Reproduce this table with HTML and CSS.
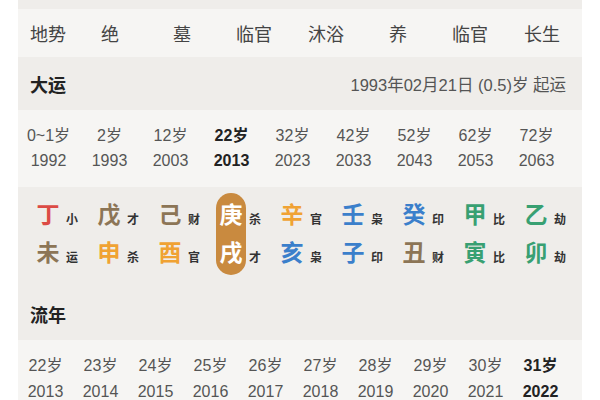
FILE: index.html
```html
<!DOCTYPE html>
<html lang="zh-CN">
<head>
<meta charset="utf-8">
<title>大运流年</title>
<link rel="stylesheet" href="styles.css">
</head>
<body>
<div class="panel">
  <div class="band"></div>
  <div class="state-row">
    <div class="state-label">地势</div>
    <div class="state">绝</div>
    <div class="state">墓</div>
    <div class="state">临官</div>
    <div class="state">沐浴</div>
    <div class="state">养</div>
    <div class="state">临官</div>
    <div class="state">长生</div>
  </div>
  <div class="head">
    <div class="head-title">大运</div>
    <div class="head-note">1993年02月21日 (0.5)岁 起运</div>
  </div>
  <div class="ages ages-9">
    <div class="age"><div>0~1岁</div><div>1992</div></div>
    <div class="age"><div>2岁</div><div>1993</div></div>
    <div class="age"><div>12岁</div><div>2003</div></div>
    <div class="age current"><div>22岁</div><div>2013</div></div>
    <div class="age"><div>32岁</div><div>2023</div></div>
    <div class="age"><div>42岁</div><div>2033</div></div>
    <div class="age"><div>52岁</div><div>2043</div></div>
    <div class="age"><div>62岁</div><div>2053</div></div>
    <div class="age"><div>72岁</div><div>2063</div></div>
  </div>
  <div class="gz">
    <div class="gz-cell">
      <div class="stems"><span class="c-fire">丁</span><span class="c-earth">未</span></div>
      <div class="gods"><span>小</span><span>运</span></div>
    </div>
    <div class="gz-cell">
      <div class="stems"><span class="c-earth">戊</span><span class="c-orange">申</span></div>
      <div class="gods"><span>才</span><span>杀</span></div>
    </div>
    <div class="gz-cell">
      <div class="stems"><span class="c-earth">己</span><span class="c-orange">酉</span></div>
      <div class="gods"><span>财</span><span>官</span></div>
    </div>
    <div class="gz-cell">
      <div class="stems active"><span>庚</span><span>戌</span></div>
      <div class="gods"><span>杀</span><span>才</span></div>
    </div>
    <div class="gz-cell">
      <div class="stems"><span class="c-orange">辛</span><span class="c-water">亥</span></div>
      <div class="gods"><span>官</span><span>枭</span></div>
    </div>
    <div class="gz-cell">
      <div class="stems"><span class="c-water">壬</span><span class="c-water">子</span></div>
      <div class="gods"><span>枭</span><span>印</span></div>
    </div>
    <div class="gz-cell">
      <div class="stems"><span class="c-water">癸</span><span class="c-earth">丑</span></div>
      <div class="gods"><span>印</span><span>财</span></div>
    </div>
    <div class="gz-cell">
      <div class="stems"><span class="c-wood">甲</span><span class="c-wood">寅</span></div>
      <div class="gods"><span>比</span><span>比</span></div>
    </div>
    <div class="gz-cell">
      <div class="stems"><span class="c-wood">乙</span><span class="c-wood">卯</span></div>
      <div class="gods"><span>劫</span><span>劫</span></div>
    </div>
  </div>
  <div class="head head-dark">
    <div class="head-title">流年</div>
  </div>
  <div class="ages ages-10">
    <div class="age"><div>22岁</div><div>2013</div></div>
    <div class="age"><div>23岁</div><div>2014</div></div>
    <div class="age"><div>24岁</div><div>2015</div></div>
    <div class="age"><div>25岁</div><div>2016</div></div>
    <div class="age"><div>26岁</div><div>2017</div></div>
    <div class="age"><div>27岁</div><div>2018</div></div>
    <div class="age"><div>28岁</div><div>2019</div></div>
    <div class="age"><div>29岁</div><div>2020</div></div>
    <div class="age"><div>30岁</div><div>2021</div></div>
    <div class="age current"><div>31岁</div><div>2022</div></div>
  </div>
</div>
</body>
</html>
```

FILE: styles.css
```css
html, body {
  margin: 0;
  padding: 0;
  background: #ffffff;
  height: 400px;
  overflow: hidden;
}

body {
  font-family: "Liberation Sans", "Noto Sans CJK SC", sans-serif;
  color: #444;
}

.panel {
  margin: 0 18px;
  width: 564px;
  background: #f6f5f3;
}

.band {
  height: 9px;
  background: #efedea;
}

.state-row {
  height: 48px;
  display: grid;
  grid-template-columns: 56px repeat(7, 72px);
  align-items: center;
  background: #f6f5f3;
  font-size: 18px;
  color: #444;
}

.state-label {
  padding-left: 12px;
}

.state {
  text-align: center;
}

.head {
  height: 53px;
  display: flex;
  align-items: center;
  justify-content: space-between;
  padding: 0 16px 0 12px;
  background: #efedea;
}

.head-title {
  font-size: 18px;
  font-weight: bold;
  color: #222;
}

.head-note {
  font-size: 16.5px;
  color: #555;
}

.head-dark {
  height: 52px;
}

.ages {
  display: grid;
  padding-top: 13px;
  font-size: 16px;
  color: #555;
  text-align: center;
  background: #f6f5f3;
}

.ages-9 {
  grid-template-columns: repeat(9, 61px);
  height: 64px;
  line-height: 25px;
}

.ages-10 {
  grid-template-columns: repeat(10, 55px);
  height: 47px;
  line-height: 26px;
}

.age.current {
  font-weight: bold;
  color: #222;
}

.gz {
  display: grid;
  grid-template-columns: repeat(9, 61px);
  padding-top: 6px;
  height: 95px;
  background: #efedea;
}

.gz-cell {
  display: flex;
  padding-left: 15px;
  align-items: flex-start;
}

.stems {
  width: 30px;
  display: flex;
  flex-direction: column;
  align-items: center;
  padding: 3px 0;
  border-radius: 15px;
  font-size: 23px;
  font-weight: 600;
  line-height: 38px;
}

.stems.active {
  background: #c98a3f;
  color: #ffffff;
}

.gods {
  display: flex;
  flex-direction: column;
  padding-top: 3px;
  margin-left: 3px;
  font-size: 12px;
  font-weight: bold;
  color: #333;
}

.gods span {
  height: 38px;
  display: flex;
  align-items: flex-end;
  padding-bottom: 8px;
  box-sizing: border-box;
  line-height: 12px;
}

.c-fire { color: #dc4b45; }
.c-earth { color: #8c7556; }
.c-orange { color: #f0a233; }
.c-water { color: #3b7fcb; }
.c-wood { color: #38a072; }
```
